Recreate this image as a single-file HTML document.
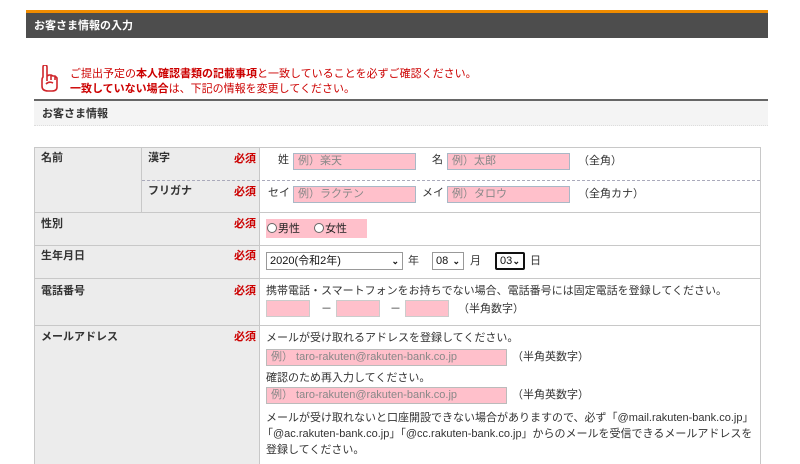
<!DOCTYPE html>
<html><head><meta charset="utf-8"><style>
*{margin:0;padding:0;box-sizing:border-box}
html,body{width:800px;height:464px;overflow:hidden}
body{background:#fff;position:relative;font-family:"Liberation Sans","Noto Sans CJK JP",sans-serif;font-size:11px;color:#333}
.a{position:absolute;white-space:nowrap;line-height:14px}
.inp{position:absolute;background:#ffc0cb;border:1px solid #a9b8c6;color:#888;font-size:11px;line-height:14px;padding-left:4px}
.inp2{position:absolute;background:#ffc0cb;border:1px solid #ccc}
.req{position:absolute;color:#c00;font-weight:bold;left:234px;font-size:11px}
.lbl{position:absolute;font-weight:bold;font-size:11px;color:#333}
.hl{position:absolute;height:1px;background:#c8c8c8}
.sel{position:absolute;border:1px solid #999;background:#fff;font-size:11px;line-height:16px;padding-left:3px;color:#111}
.sel span{position:absolute;right:3px;top:0;font-size:9px;font-weight:bold}
.rd{display:inline-block;width:10px;height:10px;border:1px solid #666;border-radius:50%;background:#fff;vertical-align:-1px;margin-right:1px}
</style></head><body>
<div style="position:absolute;left:26px;top:10px;width:742px;height:3px;background:#f08c00"></div>
<div style="position:absolute;left:26px;top:13px;width:742px;height:25px;background:#4d4d4d"></div>
<div class="a" style="left:34px;top:19px;color:#fff;font-weight:bold;font-size:11px">お客さま情報の入力</div>

<svg style="position:absolute;left:40px;top:65px" width="20" height="28" viewBox="0 0 20 28"><path d="M3 2 Q3 0 5 0 Q7 0 7 2 L7 11 L9 10 L11 10 L13 11 L15 11 L17 13 L17 22 Q17 26 12 26 L8 26 Q2 26 2 21 L2 15 Q2 13 3 12 Z M7 11 L7 16 M11 10 L11 15 M15 11 L15 15 M6 19 Q9 16 13 18" fill="none" stroke="#d0262b" stroke-width="1.6" stroke-linejoin="round"/></svg>
<div class="a" style="left:70px;top:67px;color:#c00">ご提出予定の<b>本人確認書類の記載事項</b>と一致していることを必ずご確認ください。</div>
<div class="a" style="left:70px;top:82px;color:#c00"><b>一致していない場合</b>は、下記の情報を変更してください。</div>
<div style="position:absolute;left:34px;top:99px;width:734px;height:2px;background:#666"></div>
<div style="position:absolute;left:34px;top:101px;width:734px;height:25px;background:#f4f4f4;border-bottom:1px dotted #ddd"></div>
<div class="a" style="left:42px;top:107px;font-weight:bold">お客さま情報</div>

<div style="position:absolute;left:34px;top:147px;width:727px;height:330px;border:1px solid #c8c8c8"></div>
<div style="position:absolute;left:35px;top:148px;width:224px;height:330px;background:#ececec"></div>
<div style="position:absolute;left:259px;top:148px;width:1px;height:330px;background:#c8c8c8"></div>
<div style="position:absolute;left:141px;top:148px;width:1px;height:64px;background:#c8c8c8"></div>
<div style="position:absolute;left:142px;top:180px;width:618px;border-top:1px dashed #aab"></div>
<div class="hl" style="left:35px;top:212px;width:725px"></div>
<div class="hl" style="left:35px;top:245px;width:725px"></div>
<div class="hl" style="left:35px;top:278px;width:725px"></div>
<div class="hl" style="left:35px;top:325px;width:725px"></div>

<div class="lbl a" style="left:41px;top:151px">名前</div>
<div class="lbl a" style="left:148px;top:151px">漢字</div><div class="req a" style="top:152px">必須</div>
<div class="lbl a" style="left:148px;top:184px">フリガナ</div><div class="req a" style="top:185px">必須</div>
<div class="lbl a" style="left:41px;top:217px">性別</div><div class="req a" style="top:217px">必須</div>
<div class="lbl a" style="left:41px;top:249px">生年月日</div><div class="req a" style="top:249px">必須</div>
<div class="lbl a" style="left:41px;top:284px">電話番号</div><div class="req a" style="top:284px">必須</div>
<div class="lbl a" style="left:41px;top:330px">メールアドレス</div><div class="req a" style="top:330px">必須</div>

<div class="a" style="left:278px;top:153px">姓</div>
<div class="inp" style="left:293px;top:153px;width:123px;height:17px">例）楽天</div>
<div class="a" style="left:432px;top:153px">名</div>
<div class="inp" style="left:447px;top:153px;width:123px;height:17px">例）太郎</div>
<div class="a" style="left:578px;top:154px">（全角）</div>

<div class="a" style="left:268px;top:186px">セイ</div>
<div class="inp" style="left:293px;top:186px;width:123px;height:17px">例）ラクテン</div>
<div class="a" style="left:422px;top:186px">メイ</div>
<div class="inp" style="left:447px;top:186px;width:123px;height:17px">例）タロウ</div>
<div class="a" style="left:578px;top:187px">（全角カナ）</div>

<div style="position:absolute;left:266px;top:219px;width:101px;height:19px;background:#ffc0cb"></div>
<div class="a" style="left:267px;top:222px;color:#222"><span class="rd"></span>男性　 <span class="rd"></span>女性</div>

<div class="sel" style="left:266px;top:252px;width:137px;height:18px">2020(令和2年)<span>⌄</span></div>
<div class="a" style="left:408px;top:254px">年</div>
<div class="sel" style="left:432px;top:252px;width:32px;height:18px">08<span>⌄</span></div>
<div class="a" style="left:470px;top:254px">月</div>
<div class="sel" style="left:495px;top:252px;width:30px;height:18px;border:2px solid #111;border-radius:2px;line-height:14px">03<span>⌄</span></div>
<div class="a" style="left:530px;top:254px">日</div>

<div class="a" style="left:266px;top:284px">携帯電話・スマートフォンをお持ちでない場合、電話番号には固定電話を登録してください。</div>
<div class="inp2" style="left:266px;top:300px;width:44px;height:17px"></div>
<div class="a" style="left:321px;top:302px">－</div>
<div class="inp2" style="left:336px;top:300px;width:44px;height:17px"></div>
<div class="a" style="left:390px;top:302px">－</div>
<div class="inp2" style="left:405px;top:300px;width:44px;height:17px"></div>
<div class="a" style="left:458px;top:302px">（半角数字）</div>

<div class="a" style="left:266px;top:331px">メールが受け取れるアドレスを登録してください。</div>
<div class="inp" style="left:266px;top:349px;width:241px;height:17px;border-color:#bbb">例） taro-rakuten@rakuten-bank.co.jp</div>
<div class="a" style="left:512px;top:350px">（半角英数字）</div>
<div class="a" style="left:266px;top:371px">確認のため再入力してください。</div>
<div class="inp" style="left:266px;top:387px;width:241px;height:17px;border-color:#bbb">例） taro-rakuten@rakuten-bank.co.jp</div>
<div class="a" style="left:512px;top:388px">（半角英数字）</div>
<div class="a" style="left:266px;top:411px">メールが受け取れないと口座開設できない場合がありますので、必ず「@mail.rakuten-bank.co.jp」</div>
<div class="a" style="left:262px;top:427px">「@ac.rakuten-bank.co.jp」「@cc.rakuten-bank.co.jp」からのメールを受信できるメールアドレスを</div>
<div class="a" style="left:266px;top:443px">登録してください。</div>
</body></html>
